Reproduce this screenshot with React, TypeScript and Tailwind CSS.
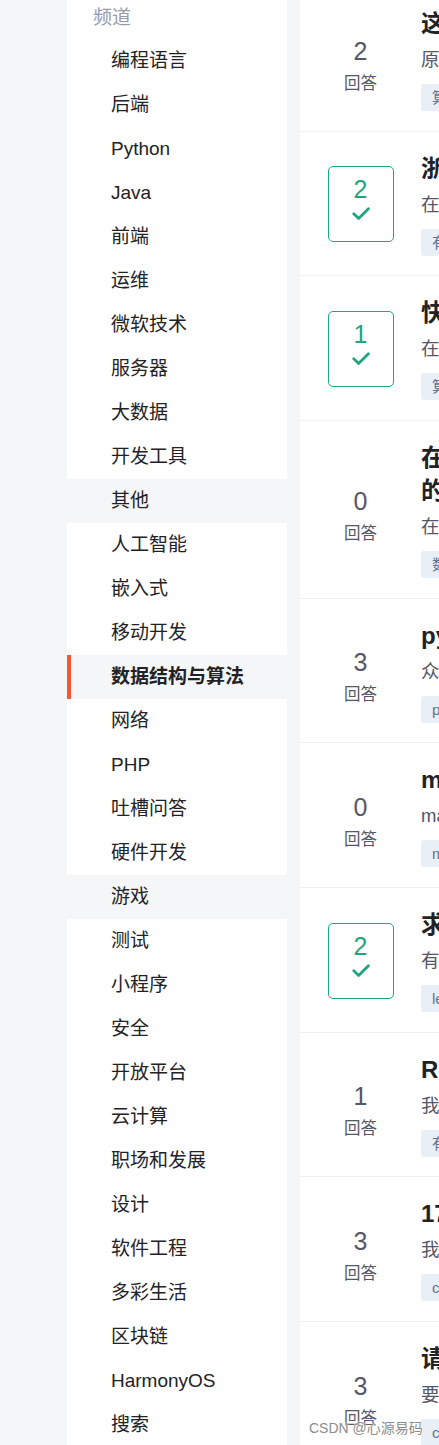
import React from "react";

type Question = {
  id: number;
  title: string;
  desc: string;
  tags: string[];
  answers: number;
  accepted?: boolean;
};

const channels = [
  "编程语言",
  "后端",
  "Python",
  "Java",
  "前端",
  "运维",
  "微软技术",
  "服务器",
  "大数据",
  "开发工具",
  "其他",
  "人工智能",
  "嵌入式",
  "移动开发",
  "数据结构与算法",
  "网络",
  "PHP",
  "吐槽问答",
  "硬件开发",
  "游戏",
  "测试",
  "小程序",
  "安全",
  "开放平台",
  "云计算",
  "职场和发展",
  "设计",
  "软件工程",
  "多彩生活",
  "区块链",
  "HarmonyOS",
  "搜索",
];

const questions: Question[] = [
  { id: 1, title: "这道算法题该怎么做？", desc: "原题如下，求大佬给个思路", tags: ["算法"], answers: 2 },
  { id: 2, title: "浙大PTA数据结构题求解", desc: "在做题的时候遇到了问题", tags: ["有向图", "c语言"], answers: 2, accepted: true },
  { id: 3, title: "快速排序的递归实现问题", desc: "在写快排的时候出现了死循环", tags: ["算法", "排序算法"], answers: 1, accepted: true },
  {
    id: 4,
    title: "在二叉树的遍历过程中如何求出每一层节点的个数与最大宽度\n的具体实现方法",
    desc: "在学习数据结构的过程中遇到了问题",
    tags: ["数据结构"],
    answers: 0,
  },
  { id: 5, title: "python 列表排序问题", desc: "众所周知，sort 函数是稳定的", tags: ["python"], answers: 3 },
  { id: 6, title: "matlab 矩阵运算求解", desc: "matlab 中如何实现这个算法", tags: ["matlab"], answers: 0 },
  { id: 7, title: "求解一道 leetcode 题目", desc: "有没有更好的解法", tags: ["leetcode"], answers: 2, accepted: true },
  { id: 8, title: "RSA 加密算法实现", desc: "我按照书上的步骤写了代码", tags: ["有限域"], answers: 1 },
  { id: 9, title: "17 届蓝桥杯真题", desc: "我的代码为什么通不过", tags: ["c语言"], answers: 3 },
  { id: 10, title: "请问这个链表怎么反转", desc: "要求不使用额外的空间", tags: ["c++"], answers: 3 },
];

const font = { fontFamily: '"Liberation Sans", "Noto Sans CJK SC", sans-serif' };

function Check() {
  return (
    <svg width="18" height="14" viewBox="0 0 18 14" fill="none" className="mt-[3px]">
      <path d="M1.8 6.8 L6.6 11.4 L16.4 1.8" stroke="#1fa67d" strokeWidth="2.8" strokeLinecap="round" strokeLinejoin="round" />
    </svg>
  );
}

function Stats({ q }: { q: Question }) {
  if (q.accepted) {
    return (
      <div className="w-[66px] h-[76px] border border-[#1fa67d] rounded-[5px] flex flex-col items-center pt-[7px]">
        <div className="text-[25px] leading-[30px] text-[#1fa67d]">{q.answers}</div>
        <Check />
      </div>
    );
  }
  return (
    <div className="w-[66px] h-[76px] flex flex-col items-center pt-[14px]">
      <div className="text-[25px] leading-[30px] text-[#555666]">{q.answers}</div>
      <div className="mt-[5px] text-[16.5px] leading-[24px] text-[#555666]">回答</div>
    </div>
  );
}

function QuestionRow({ q }: { q: Question }) {
  return (
    <div className="flex items-center border-b border-[#f0f0f2]">
      <div className="w-[121px] shrink-0 flex justify-center mt-[2px]">
        <Stats q={q} />
      </div>
      <div className="w-[700px] shrink-0 pt-[20px] pb-[19.67px]">
        <div className="text-[24px] leading-[33px] font-bold text-[#222226] whitespace-pre-line">{q.title}</div>
        <div className="mt-[7px] text-[18.5px] leading-[26px] text-[#555666] whitespace-nowrap">{q.desc}</div>
        <div className="mt-[11px] flex gap-[10px]">
          {q.tags.map((t) => (
            <span
              key={t}
              className="h-[27px] px-[11px] rounded-[3px] bg-[#e9eff6] text-[#5d7595] text-[15px] leading-[27px]"
            >
              {t}
            </span>
          ))}
        </div>
      </div>
    </div>
  );
}

export default function App() {
  return (
    <div className="relative w-[439px] h-[1445px] overflow-hidden bg-[#f5f6f7]" style={font}>
      <div className="flex pl-[67px] gap-[13px] h-full">
        {/* channel list */}
        <aside className="w-[220px] shrink-0 bg-white h-full overflow-hidden">
          <div className="-mt-[5px]">
            <div className="h-[44px] flex items-center pl-[26px] pt-[2px] text-[19px] text-[#999aaa]">频道</div>
            {channels.map((c) => {
              const active = c === "数据结构与算法";
              const hover = c === "其他" || c === "游戏";
              return (
                <div
                  key={c}
                  className={`relative h-[44px] flex items-center pl-[44px] pt-[1px] text-[19px] text-[#222226] ${
                    active ? "bg-[#f5f6f7] font-bold" : hover ? "bg-[#f5f6f7]" : ""
                  }`}
                >
                  {active && <span className="absolute left-0 top-0 bottom-0 w-[4px] bg-[#fc5531]" />}
                  {c}
                </div>
              );
            })}
          </div>
        </aside>

        {/* question list */}
        <main className="w-[840px] shrink-0 bg-white h-full overflow-hidden">
          <div className="-mt-[13px]">
            {questions.map((q) => (
              <QuestionRow key={q.id} q={q} />
            ))}
          </div>
        </main>
      </div>

      <div
        className="absolute left-[309px] top-[1419px] text-[14px] leading-[18px] text-[#8c8c8c] whitespace-nowrap"
        style={{ textShadow: "0 0 2px #fff, 0 0 2px #fff" }}
      >
        CSDN @心源易码
      </div>
    </div>
  );
}
